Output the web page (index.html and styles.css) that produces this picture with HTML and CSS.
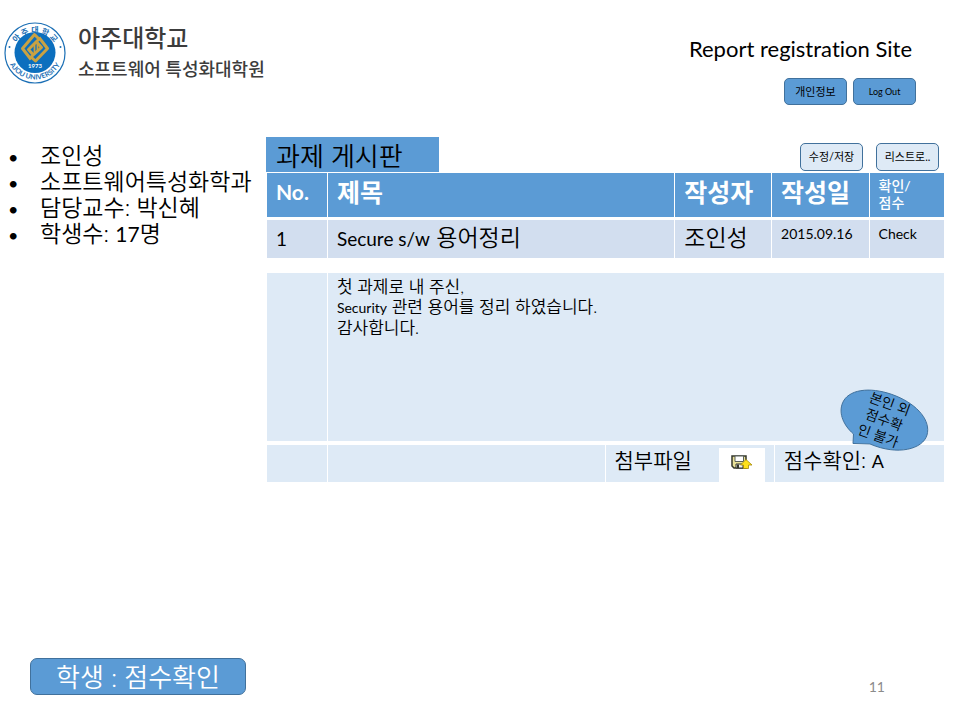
FILE: index.html
```html
<!DOCTYPE html>
<html lang="ko">
<head>
<meta charset="utf-8">
<meta name="viewport" content="width=device-width, initial-scale=1">
<title>Report registration Site</title>
<link rel="stylesheet" href="styles.css">
</head>
<body>
<div class="page">
  <header class="top">
    <a class="brand" href="#">
      <svg class="seal" viewBox="0 0 62 62" aria-hidden="true">
        <defs>
          <path id="arc-top" d="M9 38A22.500 22.500 0 1 1 53 38"/>
          <path id="arc-bottom" d="M2.500 29A28.500 28.500 0 0 0 59.500 29"/>
        </defs>
        <circle cx="31" cy="31" r="30" fill="#fff" stroke="#1b6fb5" stroke-width="1.200"/>
        <circle cx="31" cy="30.500" r="20.500" fill="#0c6fbe"/>
        <g fill="none" stroke="#c9a243" stroke-width="3" stroke-linejoin="round">
          <path d="M27 37.500L18.500 26.500L30.500 12.500L35 17L24.500 27.500L29 32.500"/>
          <path d="M35 15.500L43.500 26.500L31.500 39L27 35L37.500 25.500L33 20.500"/>
          <path d="M30.500 22V31M33.500 22V30" stroke-width="1.800"/>
        </g>
        <text class="seal-year" x="31" y="46" text-anchor="middle">1973</text>
        <text class="seal-ko" text-anchor="middle"><textPath href="#arc-top" startOffset="50%">아 주 대 학 교</textPath></text>
        <text class="seal-en" text-anchor="middle"><textPath href="#arc-bottom" startOffset="50%">AJOU UNIVERSITY</textPath></text>
        <circle cx="5.500" cy="25" r="1" fill="#1b6fb5"/>
        <circle cx="56.500" cy="25" r="1" fill="#1b6fb5"/>
      </svg>
      <span class="brand-text">
        <span class="brand-name">아주대학교</span>
        <span class="brand-dept">소프트웨어 특성화대학원</span>
      </span>
    </a>
    <div class="account">
      <h1 class="site-title">Report registration Site</h1>
      <div class="account-actions">
        <button class="btn" type="button">개인정보</button>
        <button class="btn btn-latin" type="button">Log Out</button>
      </div>
    </div>
  </header>

  <div class="content">
    <ul class="profile">
      <li>조인성</li>
      <li>소프트웨어특성화학과</li>
      <li>담당교수: 박신혜</li>
      <li>학생수: <span class="latin">17</span>명</li>
    </ul>

    <main class="board">
      <div class="board-head">
        <h2 class="board-title">과제 게시판</h2>
        <div class="board-actions">
          <button class="btn btn-light" type="button">수정/저장</button>
          <button class="btn btn-light" type="button">리스트로..</button>
        </div>
      </div>

      <table class="list">
        <colgroup><col class="c-no"><col><col class="c-author"><col class="c-date"><col class="c-check"></colgroup>
        <thead>
          <tr><th class="latin">No.</th><th>제목</th><th>작성자</th><th>작성일</th><th class="th-small">확인/<br>점수</th></tr>
        </thead>
        <tbody>
          <tr><td><span class="latin">1</span></td><td><span class="latin">Secure s/w</span> 용어정리</td><td>조인성</td><td class="td-small">2015.09.16</td><td class="td-small">Check</td></tr>
        </tbody>
      </table>

      <div class="detail">
        <table class="post">
          <colgroup><col class="c-no"><col><col class="c-file"><col class="c-score"></colgroup>
          <tbody>
            <tr class="post-body"><td></td><td colspan="3">첫 과제로 내 주신,<br><span class="latin">Security</span> 관련 용어를 정리 하였습니다.<br>감사합니다.</td></tr>
            <tr class="post-foot">
              <td></td><td></td>
              <td>
                <div class="file">
                  <span>첨부파일</span>
                  <button class="save" type="button" aria-label="첨부파일 저장">
                    <svg viewBox="0 0 22 14" aria-hidden="true">
                      <path d="M1 1H15V13H3L1 11Z" fill="#e9e29a" stroke="#34372c" stroke-width="1.500"/>
                      <path d="M4 1H12.500V6.500H4Z" fill="#fff" stroke="#59605a"/>
                      <path d="M5 9H12V13H5Z" fill="#eef0ef" stroke="#34372c"/>
                      <path d="M6 9.500H8V13H6Z" fill="#34372c"/>
                      <path d="M15 4.500L21 10H17.500V13.500H12.500V10H9.500Z" fill="#ffe11a" stroke="#a68a08" stroke-width=".800"/>
                    </svg>
                  </button>
                </div>
              </td>
              <td>점수확인: <span class="latin">A</span></td>
            </tr>
          </tbody>
        </table>
        <div class="bubble">
          <svg viewBox="0 0 92 66" aria-hidden="true">
            <path d="M14.500 46C3 36 -1 23 4.500 13C12 0 35 -1 57 8C79 17 92 33 88 47C84 61 59 68 31 56L14 55.500Z" fill="#5b9bd5" stroke="#41719c"/>
          </svg>
          <span class="bubble-text">본인 외<br>점수확<br>인 불가</span>
        </div>
      </div>
    </main>
  </div>

  <footer class="bottom">
    <button class="btn btn-large" type="button">학생 : 점수확인</button>
    <span class="page-number">11</span>
  </footer>
</div>
</body>
</html>
```
FILE: styles.css
```css
:root {
  --blue: #5b9bd5;
  --edge: #41719c;
  --pale: #deeaf6;
  --row: #d2deef;
}

* { box-sizing: border-box; }

body {
  margin: 0;
  background: #fff;
  color: #000;
  font-family: Lato, "Noto Sans CJK KR", sans-serif;
  font-weight: 350;
  font-variant-ligatures: none;
}

.page {
  min-height: 100vh;
  display: flex;
  flex-direction: column;
}

.latin { font-weight: 400; }

.top {
  display: flex;
  justify-content: space-between;
  align-items: flex-start;
  padding: 22px 44px 0 4px;
}

.brand {
  display: flex;
  gap: 12px;
  color: #3c3c3c;
  text-decoration: none;
}

.seal { width: 62px; height: 62px; }
.seal text { fill: #1b6fb5; font-weight: 700; }
.seal .seal-ko { font-size: 8px; }
.seal .seal-en { font-size: 7px; }
.seal .seal-year { font-size: 6px; fill: #fff; }

.brand-text { display: flex; flex-direction: column; }
.brand-name { font-size: 24px; line-height: 32px; font-weight: 500; }
.brand-dept { font-size: 18px; line-height: 30px; font-weight: 500; }

.account {
  display: flex;
  flex-direction: column;
  align-items: flex-end;
  gap: 14px;
}

.site-title {
  margin: 0;
  padding: 12px 4px 0 0;
  font-size: 22px;
  line-height: 30px;
  font-weight: 400;
}

.account-actions { display: flex; gap: 6px; }

.btn {
  min-width: 63px;
  height: 27px;
  padding: 0 6px;
  border: 1px solid var(--edge);
  border-radius: 5px;
  background: var(--blue);
  color: #000;
  font-family: inherit;
  font-size: 11px;
  line-height: 16px;
  font-weight: 400;
  white-space: nowrap;
}

.btn-latin { font-size: 9px; }
.btn-light { background: var(--pale); height: 28px; }

.content {
  display: grid;
  grid-template-columns: 266px 1fr;
  padding: 32px 16px 0 0;
}

.profile {
  margin: 0;
  padding: 5px 0 0 40px;
  font-size: 23px;
  line-height: 26px;
  list-style: none;
}

.profile li { position: relative; height: 26px; white-space: nowrap; }
.profile li::before {
  content: "•";
  display: inline-block;
  width: 32px;
  margin-left: -32px;
  font-size: 18px;
  font-weight: 400;
}
.profile .latin { font-size: 21px; }

.board-head { display: flex; justify-content: space-between; }

.board-title {
  width: 173px;
  margin: 0;
  padding: 4px 10px 0;
  background: var(--blue);
  font-size: 26px;
  line-height: 31px;
  font-weight: 350;
}

.board-actions { display: flex; gap: 13px; padding: 6px 5px 0 0; }

table {
  width: 100%;
  table-layout: fixed;
  border-collapse: separate;
  border-spacing: 0;
}

th, td {
  padding: 4px 9px;
  border-right: 1px solid #fff;
  text-align: left;
  vertical-align: top;
}

th:last-child, td:last-child { border-right: 0; }

.list { margin-top: 1px; border-left: 1px solid #fff; }
.c-no { width: 9%; }
.c-author { width: 14.300%; }
.c-date { width: 14.400%; }
.c-check { width: 11%; }
.c-file { width: 25%; }
.c-score { width: 25%; }

.list th {
  height: 47px;
  border-bottom: 3px solid #fff;
  background: var(--blue);
  color: #fff;
  font-size: 25px;
  line-height: 30px;
  font-weight: 700;
}

.list th.latin { font-size: 21px; }
.list .th-small { font-size: 14px; line-height: 17px; font-weight: 500; }
.list td { height: 38px; background: var(--row); font-size: 23px; line-height: 26px; }
.list td .latin { font-size: 19px; }
.list .td-small { font-size: 14px; line-height: 20px; font-weight: 400; }

.detail { position: relative; margin-top: 15px; }
.post { border-left: 1px solid #fff; }
.post td { background: var(--pale); }
.post-body td { height: 172px; border-bottom: 4px solid #fff; font-size: 17px; line-height: 20px; }
.post-body .latin { font-size: 14px; }
.post-foot td { height: 37px; padding: 0 9px; font-size: 21px; line-height: 30px; }
.post-foot .latin { font-size: 18px; }

.file { display: flex; justify-content: space-between; }

.save {
  width: 46px;
  height: 34px;
  margin-top: 3px;
  padding: 0;
  border: 0;
  background: #fff;
}

.save svg { display: block; width: 22px; height: 14px; margin: 0 auto 6px; }

.bubble {
  position: absolute;
  right: 13px;
  bottom: 28px;
  width: 92px;
  height: 66px;
}

.bubble svg { display: block; width: 100%; height: 100%; }

.bubble-text {
  position: absolute;
  top: 6px;
  left: 24px;
  font-size: 14px;
  line-height: 17px;
  white-space: nowrap;
  text-align: center;
  transform: rotate(20deg);
}

.bottom {
  display: flex;
  justify-content: space-between;
  align-items: flex-end;
  margin-top: auto;
  padding: 0 75px 25px 30px;
}

.btn-large {
  width: 216px;
  height: 37px;
  border-radius: 7px;
  color: #fff;
  font-size: 26px;
  line-height: 32px;
  font-weight: 350;
}

.page-number {
  color: #8b8b8b;
  font-size: 14px;
  line-height: 16px;
  font-weight: 400;
}
```
